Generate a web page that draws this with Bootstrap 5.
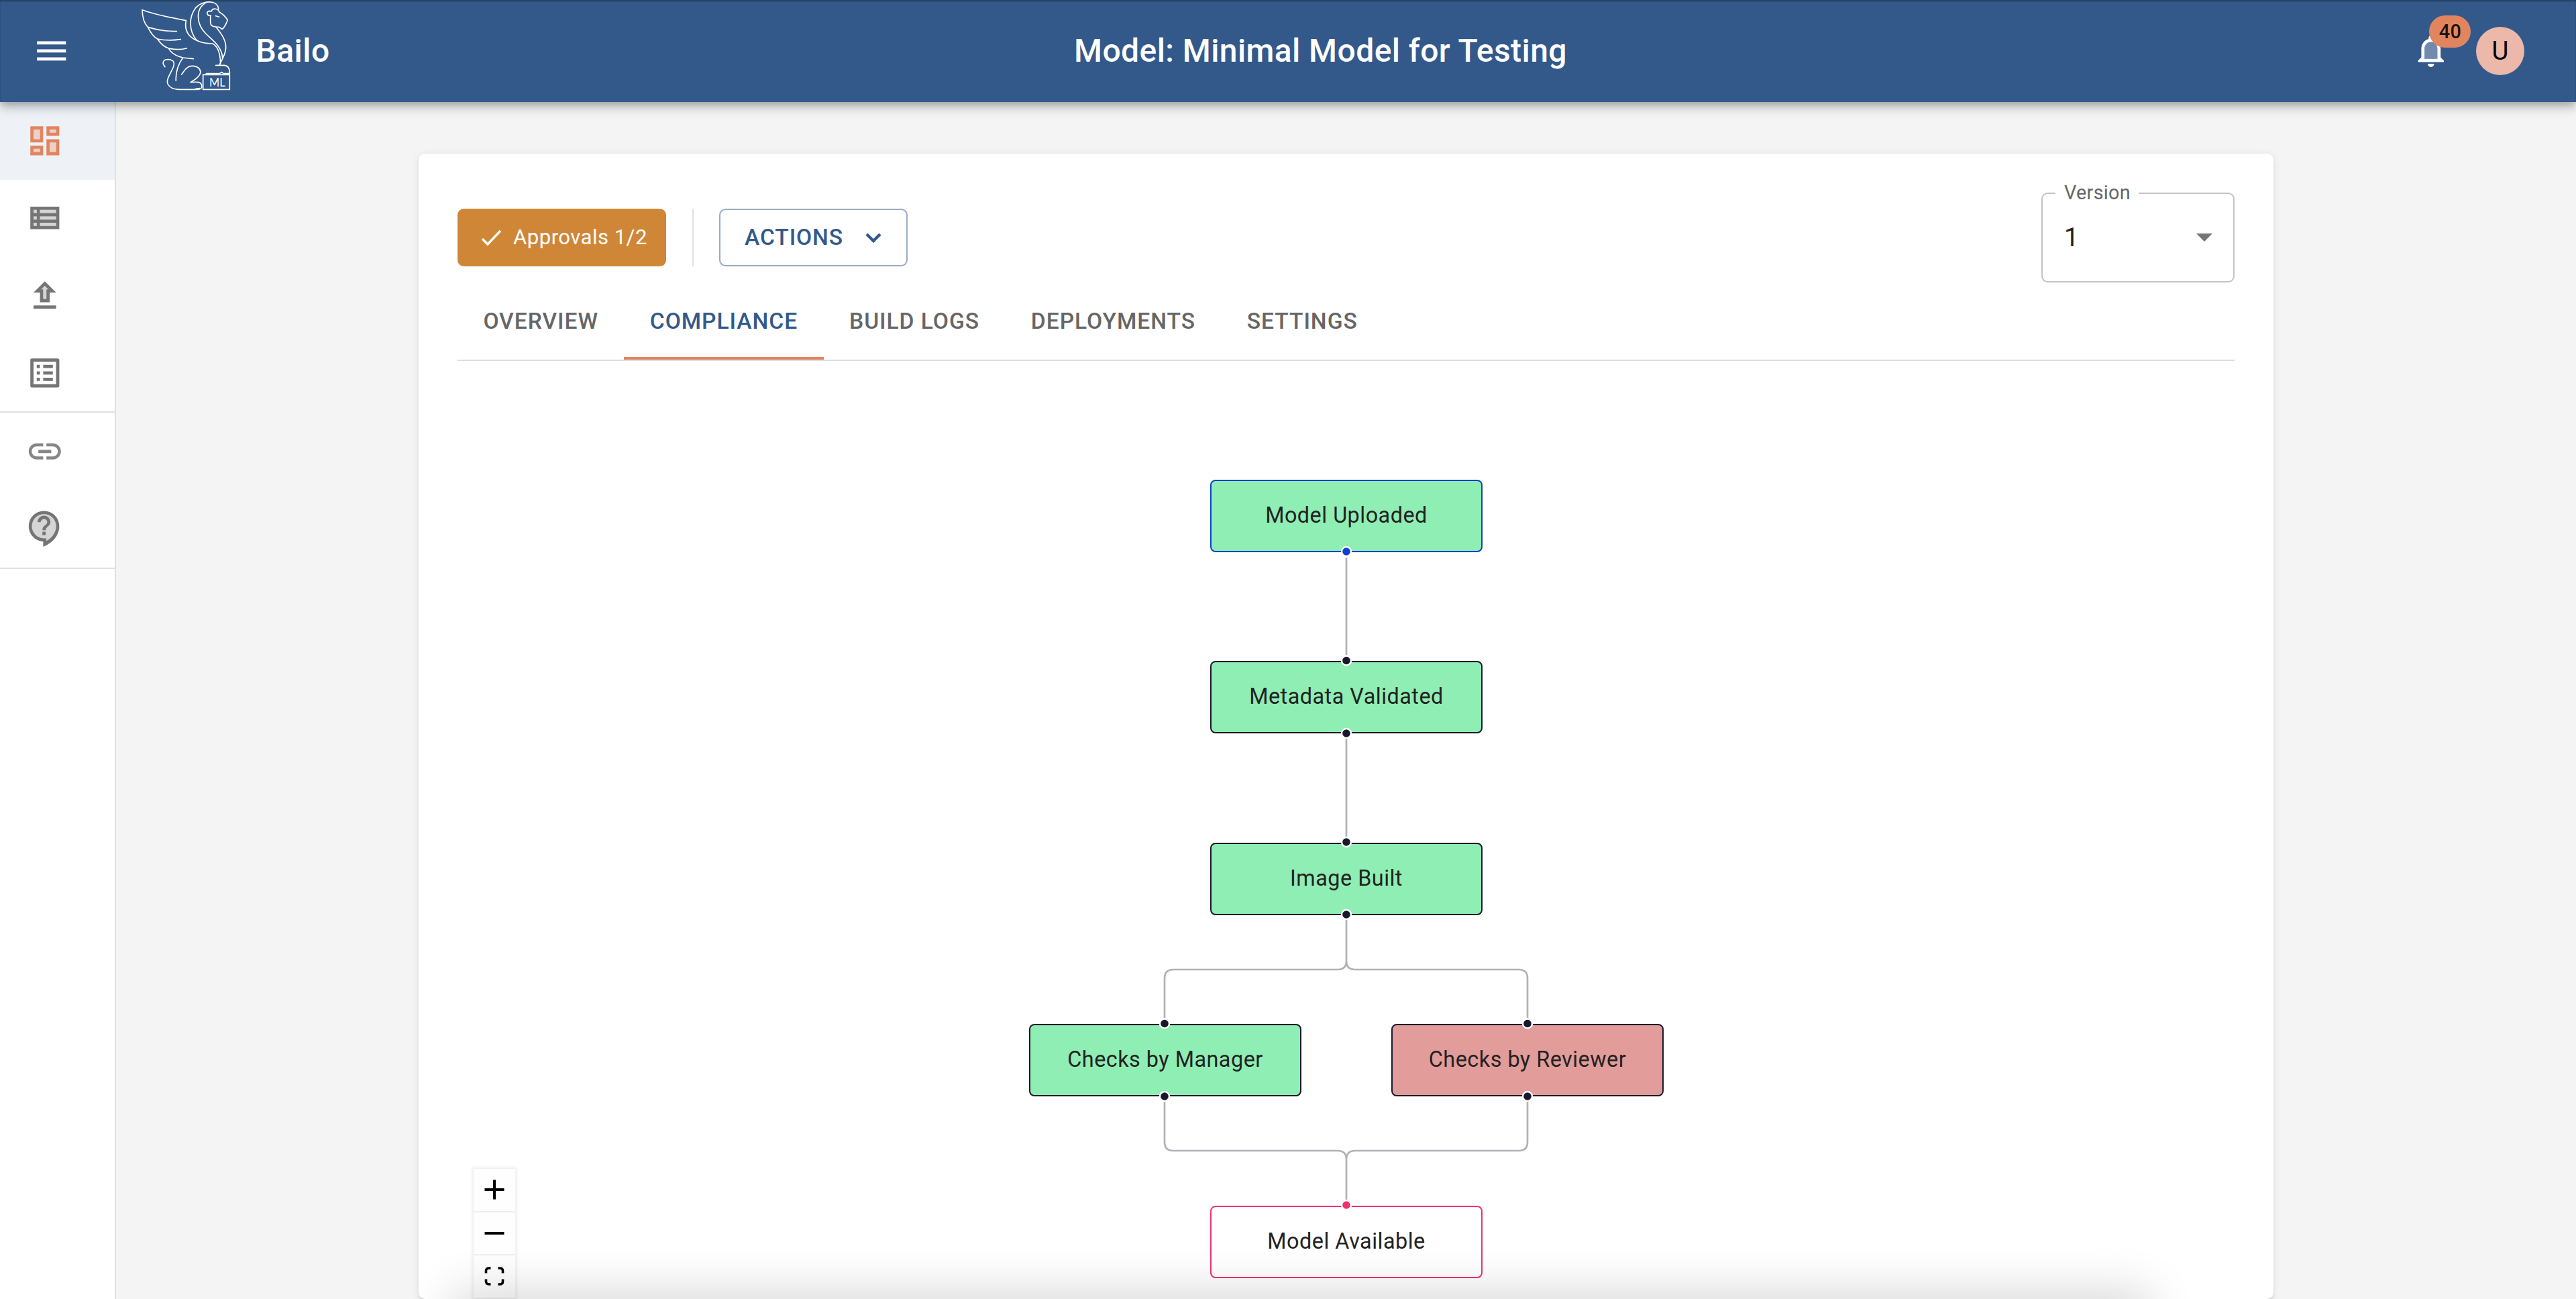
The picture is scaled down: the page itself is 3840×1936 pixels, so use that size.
<!DOCTYPE html>
<html lang="en">
<head>
<meta charset="utf-8">
<title>Bailo</title>
<meta name="viewport" content="width=device-width, initial-scale=1">
<link href="https://cdn.jsdelivr.net/npm/bootstrap@5.3.0/dist/css/bootstrap.min.css" rel="stylesheet">
<script src="https://cdn.jsdelivr.net/npm/bootstrap@5.3.0/dist/js/bootstrap.bundle.min.js"></script>
<style>
  html, body { height: 1936px; overflow: hidden; }
  body { font-family: Roboto, "Liberation Sans", sans-serif; font-size: 38.4px; background: #f4f4f4; color: #212121; }
  .mi { width: 57.6px; height: 57.6px; fill: currentColor; display: block; flex: none; }
  .topbar { height: 152px; flex: none; padding: 0 77px 0 48px; background: #33598b; color: #fff; z-index: 5;
    box-shadow: 0 4.8px 9.6px -2.4px rgba(0,0,0,.2), 0 9.6px 12px 0 rgba(0,0,0,.14), 0 2.4px 24px 0 rgba(0,0,0,.12), inset 0 2px 2px #24415f; }
  .heading { font-size: 48px; font-weight: 500; line-height: 76px; letter-spacing: .42px; white-space: nowrap; margin: 0; }
  .brandmark { width: 160px; height: 145px; margin: -7px 0 0 94px; flex: none; fill: none; stroke: #fff; stroke-width: 5; stroke-linejoin: round; stroke-linecap: round; }
  .brandname { margin-left: 22px; }
  .pagename { padding-right: 150px; }
  .count { top: -24px; left: 26px; width: 62px; height: 48px; border-radius: 24px; background: #e2855f; color: #1c130e; font-size: 28.8px; font-weight: 500; letter-spacing: .3px; }
  .avatar { width: 72px; height: 72px; border-radius: 50%; background: #ebb8aa; color: #000; margin-left: 38px; }
  .rail { width: 173px; flex: none; border-right: 2px solid #e0e0e0; background: #fff; color: #757575; }
  .rail a { height: 115.2px; padding-left: 38px; color: inherit; }
  .rail a.active { background: #eef2f7; color: #e2855f; height: 115.6px; }
  .rail hr { margin: 0; border: 0; height: 2px; background: #e0e0e0; opacity: 1; }
  .sheet { margin: 77px 451px 0 451px; padding: 58px; padding-bottom: 0; background: #fff; border-radius: 9.6px;
    box-shadow: 0 4.8px 2.4px -2.4px rgba(0,0,0,.06), 0 2.4px 2.4px 0 rgba(0,0,0,.05), 0 2.4px 12px 0 rgba(0,0,0,.09); }
  .toolbar { height: 134px; }
  .approvals { width: 311px; height: 86px; margin-top: 24px; border-radius: 9.6px; background: #cf8737; color: #fff; font-size: 31.2px; letter-spacing: .42px; padding: 0 0 0 32px; border: 0; }
  .approvals svg { width: 36px; height: 36px; margin-right: 15px; fill: none; stroke: #fff; stroke-width: 3.4; }
  .rule { width: 2px; height: 86px; margin: 24px 38px 0 39px; background: #e0e0e0; }
  .actions { width: 281px; height: 86px; margin-top: 24px; border: 2px solid #99acc5; border-radius: 9.6px; color: #33598b; font-size: 33.6px; font-weight: 500; letter-spacing: .9px; padding: 0 0 0 36px; }
  .actions svg { width: 24px; height: 16px; margin-left: 33px; fill: none; stroke: currentColor; stroke-width: 4.4; }
  .version { width: 288px; height: 134px; border: 2px solid #c4c4c4; border-radius: 9.6px; padding: 0 31px 0 32px; }
  .version label { top: -21px; left: 19px; width: 124px; height: 40px; line-height: 38px; background: #fff; color: #666; font-size: 28.8px; letter-spacing: .3px; padding-left: 13px; }
  .tabline { height: 117px; border-bottom: 2px solid #dedede; flex-wrap: nowrap; }
  .tabline .nav-link { height: 115px; padding: 34px 38.4px 0; border: 0; border-bottom: 4px solid transparent; border-radius: 0; background: none; color: #666; font-size: 33.6px; line-height: 48px; font-weight: 500; letter-spacing: .96px; white-space: nowrap; }
  .tabline .nav-link.active { color: #33598b; border-bottom-color: #e2855f; background: none; }
  .flow { height: 1398px; }
  .edges { left: 0; top: 0; width: 2649px; height: 1398px; z-index: 2; pointer-events: none; }
  .step { width: 406px; height: 107.500px; border: 2px solid #1a192b; border-radius: 8px; background: #8feeb4; font-size: 32.4px; letter-spacing: .48px; color: #222; }
  .step-fail { background: #e29c9a; }
  .step-in { border-color: #0f41d0; }
  .step-out { border-color: #f0326f; background: #fff; }
  .zoomer { left: 24px; top: 1204px; width: 62px; box-shadow: 0 0 5px 2px rgba(0,0,0,.08); }
  .zoomer button { width: 62px; height: 64.5px; padding: 0; border: 0; border-bottom: 2px solid #eee; background: #fefefe; }
  .zoomer svg { width: 30px; height: 30px; fill: none; stroke: #000; stroke-width: 4; }
  .floor { left: 695px; right: 655px; bottom: -60px; height: 50px; z-index: 9; box-shadow: 0 0 70px 20px rgba(0,0,0,.16); }
</style>
</head>
<body class="d-flex flex-column position-relative">
<header class="topbar d-flex align-items-center position-relative">
  <svg class="mi" viewBox="0 0 24 24"><path d="M3 18h18v-2H3v2zm0-5h18v-2H3v2zm0-7v2h18V6H3z"/></svg>
  <svg class="brandmark" viewBox="0 0 480 435">
    <path d="M232 92C170 80 90 65 36 44C37 80 45 105 61 121C100 133 145 140 190 140M61 121C75 150 88 165 104 174C140 182 180 180 208 176M104 174C120 198 135 210 154 216C185 223 212 222 235 216M154 216C165 238 190 251 218 258L265 263"/>
    <path d="M232 92C223 140 245 166 280 181C300 192 320 195 350 195C372 205 385 235 386 285"/>
    <path d="M280 181C242 135 245 75 275 35C305 0 375 -2 377 41"/>
    <path d="M322 11C270 40 280 110 320 150C350 180 395 210 395 262"/>
    <path d="M343 70C325 72 320 52 336 49C345 49 345 52 346 50C350 36 375 35 381 54C400 65 410 77 418 90C411 105 407 120 393 131C386 124 382 120 378 121C355 119 341 119 341 98V70M365 71L380 76"/>
    <path d="M366 121C393 155 411 180 410 215C408 246 393 265 381 291M365 292H402C420 293 428 305 427 329M322 329H380L392 323L399 329H427"/>
    <path d="M218 258C195 290 185 325 187 361M138 299C122 283 130 266 150 266C173 266 184 275 175 300C163 330 142 355 150 375C160 395 180 400 205 400H282C300 402 304 390 302 382C299 366 285 365 252 368C275 355 296 340 297 322C293 292 250 286 229 310L212 333M275 397L292 395"/>
    <path d="M308 334H427V400H308Z" stroke-linejoin="miter"/>
    <text x="336" y="388" font-family="Lato, sans-serif" font-size="54" fill="#fff" stroke="none" textLength="71" lengthAdjust="spacingAndGlyphs">ML</text>
  </svg>
  <h1 class="heading brandname">Bailo</h1>
  <h2 class="heading pagename flex-grow-1 text-center">Model: Minimal Model for Testing</h2>
  <div class="position-relative">
    <svg class="mi" viewBox="0 0 24 24"><path opacity=".3" d="M12 6.5c-2.49 0-4 2.02-4 4.5v6h8v-6c0-2.48-1.51-4.5-4-4.5z"/><path d="M12 22c1.1 0 2-.9 2-2h-4c0 1.1.9 2 2 2zm6-6v-5c0-3.07-1.63-5.64-4.5-6.32V4c0-.83-.67-1.5-1.5-1.5s-1.5.67-1.5 1.5v.68C7.64 5.36 6 7.92 6 11v5l-2 2v1h16v-1l-2-2zm-2 1H8v-6c0-2.48 1.51-4.5 4-4.5s4 2.02 4 4.5v6z"/></svg>
    <span class="count position-absolute d-flex align-items-center justify-content-center">40</span>
  </div>
  <div class="avatar d-flex align-items-center justify-content-center">U</div>
</header>
<div class="d-flex flex-grow-1">
  <nav class="rail">
    <a class="active d-flex align-items-center"><svg class="mi" viewBox="0 0 24 24"><path opacity=".3" d="M5 5h4v6H5zm10 8h4v6h-4zM5 17h4v2H5zM15 5h4v2h-4z"/><path d="M3 13h8V3H3v10zm2-8h4v6H5V5zm8 16h8V11h-8v10zm2-8h4v6h-4v-6zM13 3v6h8V3h-8zm6 4h-4V5h4v2zM3 21h8v-6H3v6zm2-4h4v2H5v-2z"/></svg></a>
    <a class="d-flex align-items-center"><svg class="mi" viewBox="0 0 24 24"><path opacity=".3" d="M5 7h2v2H5zm0 4h2v2H5zm0 4h2v2H5zM9 7h10v2H9zm0 4h10v2H9zm0 4h10v2H9z"/><path d="M3 5v14h18V5H3zm4 2v2H5V7h2zm-2 6v-2h2v2H5zm0 2h2v2H5v-2zm14 2H9v-2h10v2zm0-4H9v-2h10v2zm0-4H9V7h10v2z"/></svg></a>
    <a class="d-flex align-items-center"><svg class="mi" viewBox="0 0 24 24"><path opacity=".3" d="M9.83 8H11v6h2V8h1.17L12 5.83z"/><path d="M5 18h14v2H5zm4-2h6v-6h4l-7-7-7 7h4zm3-10.17L14.17 8H13v6h-2V8H9.83z"/></svg></a>
    <a class="d-flex align-items-center"><svg class="mi" viewBox="0 0 24 24"><path d="M11 7h6v2h-6zm0 4h6v2h-6zm0 4h6v2h-6zM7 7h2v2H7zm0 4h2v2H7zm0 4h2v2H7zM20.1 3H3.9c-.5 0-.9.4-.9.9v16.2c0 .4.4.9.9.9h16.2c.4 0 .9-.5.9-.9V3.9c0-.5-.5-.9-.9-.9zM19 19H5V5h14v14z"/></svg></a>
    <hr>
    <a class="d-flex align-items-center"><svg class="mi" viewBox="0 0 24 24" opacity=".87"><path d="M3.9 12c0-1.71 1.39-3.1 3.1-3.1h4V7H7c-2.76 0-5 2.24-5 5s2.24 5 5 5h4v-1.9H7c-1.71 0-3.1-1.39-3.1-3.1zM8 13h8v-2H8v2zm9-6h-4v1.9h4c1.71 0 3.1 1.39 3.1 3.1s-1.39 3.1-3.1 3.1h-4V17h4c2.76 0 5-2.24 5-5s-2.24-5-5-5z"/></svg></a>
    <a class="d-flex align-items-center"><svg class="mi" viewBox="0 0 24 24"><path opacity=".3" d="M11.5 3C7.36 3 4 6.36 4 10.5S7.36 18 11.5 18H13v1.7c3.6-2 6-5.7 6-9.2C19 6.36 15.6 3 11.5 3z"/><path d="M11.5 1C6.26 1 2 5.26 2 10.5S6.26 20 11.5 20h-.5v3.2C17 21 21 16 21 10.5 21 5.26 16.74 1 11.5 1zm1.500 18.700V18h-1.500C7.360 18 4 14.640 4 10.500S7.360 3 11.500 3 19 6.360 19 10.500c0 3.600-2.400 7.200-6 9.200z"/><path d="M10.500 14h2v2h-2zM7.500 8h2c0-1.100.9-2 2-2s2 .9 2 2c0 2-3 1.750-3 5h2c0-2.250 3-2.500 3-5 0-2.210-1.790-4-4-4s-4 1.790-4 4z"/></svg></a>
    <hr>
  </nav>
  <main class="flex-grow-1">
    <section class="sheet">
      <div class="toolbar d-flex align-items-start">
        <button class="approvals btn d-flex align-items-center"><svg viewBox="0 0 36 36"><path d="M5 20l8 8L32 8"/></svg>Approvals 1/2</button>
        <div class="rule"></div>
        <button class="actions btn d-flex align-items-center">ACTIONS<svg viewBox="0 0 24 16"><path d="M2 3l10 10L22 3"/></svg></button>
        <div class="version position-relative ms-auto d-flex align-items-center justify-content-between">
          <label class="position-absolute">Version</label>
          <span>1</span>
          <svg width="24" height="12" viewBox="0 0 24 12"><path d="M0 0h24L12 12z" fill="#757575"/></svg>
        </div>
      </div>
      <ul class="nav tabline">
        <li class="nav-item"><a class="nav-link">OVERVIEW</a></li>
        <li class="nav-item"><a class="nav-link active">COMPLIANCE</a></li>
        <li class="nav-item"><a class="nav-link">BUILD LOGS</a></li>
        <li class="nav-item"><a class="nav-link">DEPLOYMENTS</a></li>
        <li class="nav-item"><a class="nav-link">SETTINGS</a></li>
      </ul>
      <div class="flow position-relative">
        <div class="step step-in position-absolute d-flex align-items-center justify-content-center" style="left:1122px;top:177px">Model Uploaded</div>
        <div class="step position-absolute d-flex align-items-center justify-content-center" style="left:1122px;top:447px">Metadata Validated</div>
        <div class="step position-absolute d-flex align-items-center justify-content-center" style="left:1122px;top:718px">Image Built</div>
        <div class="step position-absolute d-flex align-items-center justify-content-center" style="left:852px;top:988px">Checks by Manager</div>
        <div class="step step-fail position-absolute d-flex align-items-center justify-content-center" style="left:1392px;top:988px">Checks by Reviewer</div>
        <div class="step step-out position-absolute d-flex align-items-center justify-content-center" style="left:1122px;top:1259px">Model Available</div>
        <svg class="edges position-absolute" viewBox="682 538 2649 1398">
          <g fill="none" stroke="#b1b1b7" stroke-width="2.7">
            <path d="M2007 831V976M2007 1101V1247M2007 1371V1432Q2007 1445 1994 1445H1749Q1736 1445 1736 1458V1517M2007 1371V1432Q2007 1445 2020 1445H2264Q2277 1445 2277 1458V1517M1736 1642V1702Q1736 1715 1749 1715H1994Q2007 1715 2007 1728V1788M2277 1642V1702Q2277 1715 2264 1715H2020Q2007 1715 2007 1728V1788"/>
          </g>
          <g fill="#1a192b" stroke="#fff" stroke-width="2.4">
            <circle cx="2007" cy="822" r="7" fill="#0f41d0"/><circle cx="2007" cy="984.500" r="7"/><circle cx="2007" cy="1093" r="7"/><circle cx="2007" cy="1255" r="7"/><circle cx="2007" cy="1363" r="7"/>
            <circle cx="1736" cy="1525.500" r="7"/><circle cx="2277" cy="1525.500" r="7"/><circle cx="1736" cy="1634" r="7"/><circle cx="2277" cy="1634" r="7"/><circle cx="2007" cy="1796" r="7" fill="#f0326f"/>
          </g>
        </svg>
        <div class="zoomer position-absolute d-flex flex-column">
          <button class="d-flex align-items-center justify-content-center"><svg viewBox="0 0 30 30"><path d="M15 .5v29M.5 15h29"/></svg></button>
          <button class="d-flex align-items-center justify-content-center"><svg viewBox="0 0 30 30"><path d="M.5 15h29"/></svg></button>
          <button class="d-flex align-items-center justify-content-center"><svg viewBox="0 0 30 30"><path d="M9.500 3H7Q2.500 3 2.500 7v3.500M20.500 3H23Q27.500 3 27.500 7v3.500M9.500 27H7Q2.500 27 2.500 23v-3.500M20.500 27H23Q27.500 27 27.500 23v-3.500" stroke-width="3.600"/></svg></button>
        </div>
      </div>
    </section>
  </main>
</div>
<div class="floor position-absolute"></div>
</body>
</html>
